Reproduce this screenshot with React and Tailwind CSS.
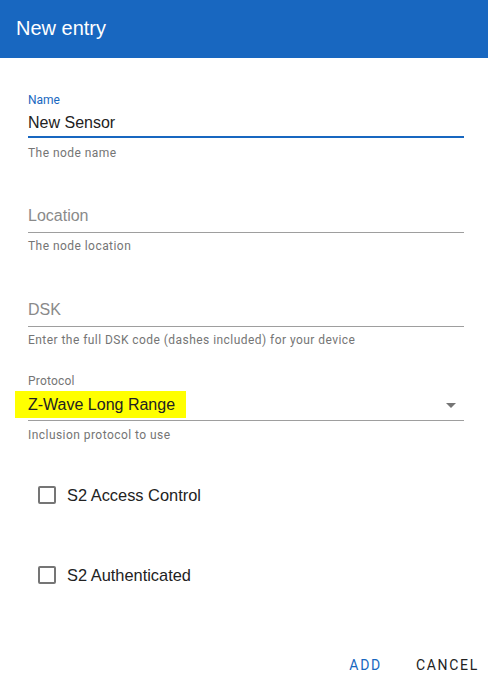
import { useState } from "react";

const sans = "font-['Liberation_Sans',Arial,sans-serif]";
const roboto = "font-['Roboto','Liberation_Sans',sans-serif]";

function Checkbox({ label, className }) {
  const [checked, setChecked] = useState(false);
  return (
    <label className={`flex items-center h-10 pl-[38px] cursor-pointer ${className}`}>
      <span
        onClick={() => setChecked(!checked)}
        className={`w-[18px] h-[18px] rounded-[2px] border-2 ${
          checked ? "border-[#1867c0] bg-[#1867c0]" : "border-[#757575]"
        }`}
      />
      <span className={`ml-[11px] text-[16.4px] text-[#222] ${sans}`}>{label}</span>
    </label>
  );
}

export default function App() {
  const [name, setName] = useState("New Sensor");

  return (
    <div className="w-[488px] h-[687px] bg-white flex flex-col">
      {/* header */}
      <div className="h-[58px] bg-[#1867c0] flex items-center px-4 pb-[3px]">
        <h1 className={`text-[20px] text-white ${sans}`}>New entry</h1>
      </div>

      <div className="pl-[28px] pr-6 flex flex-col">
        {/* Name */}
        <div className="mt-[34px]">
          <div className={`h-4 leading-4 text-xs text-[#1867c0] ${roboto}`}>Name</div>
          <div className="h-7 pt-[2px]">
            <input
              value={name}
              onChange={(e) => setName(e.target.value)}
              className={`w-full h-6 leading-6 text-base text-[#222] outline-none ${sans}`}
            />
          </div>
          <div className="h-[2px] bg-[#1867c0]" />
          <div className={`mt-[7px] h-4 leading-4 text-xs text-[#757575] tracking-[0.45px] ${roboto}`}>
            The node name
          </div>
        </div>

        {/* Location */}
        <div className="mt-[43px]">
          <div className={`h-7 leading-6 text-base text-[#8a8a8a] ${sans}`}>Location</div>
          <div className="h-px bg-[#9e9e9e]" />
          <div className={`mt-[5px] h-4 leading-4 text-xs text-[#757575] tracking-[0.45px] ${roboto}`}>
            The node location
          </div>
        </div>

        {/* DSK */}
        <div className="mt-[44px]">
          <div className={`h-7 leading-6 text-base text-[#8a8a8a] ${sans}`}>DSK</div>
          <div className="h-px bg-[#9e9e9e]" />
          <div className={`mt-[5px] h-4 leading-4 text-xs text-[#757575] tracking-[0.45px] ${roboto}`}>
            Enter the full DSK code (dashes included) for your device
          </div>
        </div>

        {/* Protocol */}
        <div className="mt-[25px]">
          <div className={`h-4 leading-4 text-xs text-[#757575] tracking-[0.2px] ${roboto}`}>Protocol</div>
          <div className="h-[31px] pt-[2px] flex items-start justify-between">
            <span
              className={`-ml-[13px] pl-[13px] pr-[11px] h-[27px] leading-[27px] bg-[#ffff00] text-base text-[#222] ${sans}`}
            >
              Z-Wave Long Range
            </span>
            <span className="mt-[12px] mr-[8px] w-0 h-0 border-x-[5px] border-x-transparent border-t-[5px] border-t-[#757575]" />
          </div>
          <div className="h-px bg-[#9e9e9e]" />
          <div className={`mt-[6px] h-4 leading-4 text-xs text-[#757575] tracking-[0.45px] ${roboto}`}>
            Inclusion protocol to use
          </div>
        </div>
      </div>

      {/* checkboxes */}
      <Checkbox label="S2 Access Control" className="mt-[32px]" />
      <Checkbox label="S2 Authenticated" className="mt-[40px]" />

      {/* actions */}
      <div className="mt-auto mb-[4px] flex justify-end items-center gap-[34px] pr-[9px] h-9">
        <button className={`text-sm tracking-[1.7px] text-[#1867c0] ${roboto}`}>ADD</button>
        <button className={`text-sm tracking-[1.7px] text-[#222] ${roboto}`}>CANCEL</button>
      </div>
    </div>
  );
}
